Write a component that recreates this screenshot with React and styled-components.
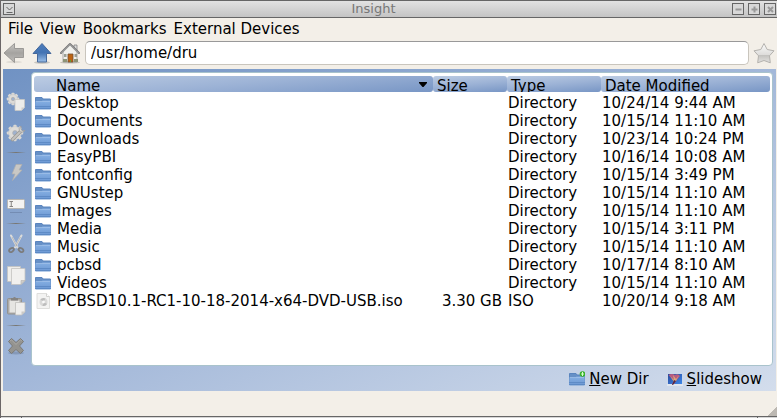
import React, { useState } from "react";
import styled, { createGlobalStyle } from "styled-components";

const GlobalStyle = createGlobalStyle`
  * { box-sizing: border-box; }
  body {
    margin: 0;
    background: #f3efe8;
    color: #000;
    font: 15px/18px "DejaVu Sans", sans-serif;
  }
  button, input { font: inherit; color: inherit; }
`;

const Window = styled.div`
  display: flex;
  flex-direction: column;
  min-height: 100vh;
  border-left: 1px solid #6b6667;
  background: #f3efe8;
`;

const TitleBar = styled.header`
  display: flex;
  align-items: center;
  height: 18px;
  padding: 0 1px 0 2px;
  border-top: 1px solid #666;
  border-bottom: 1px solid #666;
  background: linear-gradient(#e2e2e2, #c4c4c4);
`;

const Title = styled.h1`
  flex: 1;
  margin: 0;
  text-align: center;
  font-size: 13px;
  font-weight: 400;
  line-height: 18px;
  color: #777;
`;

const WindowControls = styled.div`
  display: flex;
  gap: 4px;
`;

const PlainButton = styled.button`
  display: flex;
  align-items: center;
  justify-content: center;
  padding: 0;
  border: 0;
  background: none;
`;

const WindowButton = styled(PlainButton)`
  width: 12px;
  height: 12px;
  border: 1px solid #666;
  background: #d8d8d8;
`;

const MenuBar = styled.nav`
  display: flex;
  gap: 7px;
  height: 22px;
  padding: 1px 7px;
`;

const MenuItem = styled(PlainButton)`
  height: 20px;
  line-height: 20px;
`;

const ToolBar = styled.div`
  display: flex;
  align-items: center;
  gap: 4px;
  height: 29px;
  padding: 0 2px 3px;
`;

const NavTools = styled.div`
  display: flex;
  gap: 6px;
`;

const ToolButton = styled(PlainButton)`
  flex: none;
  width: 22px;
  height: 26px;
`;

const PathInput = styled.input`
  flex: 1;
  min-width: 0;
  height: 24px;
  padding: 0 5px;
  border: 1px solid #c9c5bd;
  border-top-color: #999;
  border-radius: 5px;
  background: #fff;
  outline: none;
`;

const Body = styled.main`
  flex: 1;
  display: grid;
  grid-template-columns: 28px 1fr;
  grid-template-rows: 1fr 25px;
  margin: 0 1px 0 2px;
  padding-top: 3px;
  background: linear-gradient(to bottom right, #7092c3, #a3b8d9 50%, #d3ddec);
`;

const SideBar = styled.div`
  display: flex;
  flex-direction: column;
  padding-top: 14px;
  padding-right: 2px;
`;

const SideButton = styled(PlainButton)`
  height: 31px;
`;

const Separator = styled.hr`
  width: 20px;
  height: 1px;
  margin: 4px auto;
  border: 0;
  background: linear-gradient(90deg, transparent, #77756f 50%, transparent);
`;

const FilePane = styled.section`
  margin-right: 3px;
  padding: 3px 2px;
  border: 1px solid #a9c3cc;
  border-radius: 4px;
  background: #fff;
`;

const FileTable = styled.table`
  width: 100%;
  table-layout: fixed;
  border-collapse: collapse;
`;

const Col = styled.col`
  width: ${(p) => p.$width};
`;

const HeadCell = styled.th`
  padding: 0 0 2px;
  font-weight: 400;
  text-align: left;
`;

const HeadLabel = styled.div`
  display: flex;
  align-items: flex-start;
  justify-content: space-between;
  height: 16px;
  padding: 1px 6px 0 ${(p) => (p.$first ? "22px" : "4px")};
  border-radius: 3px;
  background: linear-gradient(175deg, #bccce3, #9db3d6 50%, #7896c5);
  overflow: hidden;
`;

const SortArrow = styled.svg`
  flex: none;
  margin-top: 5px;
`;

const Cell = styled.td`
  height: 18px;
  padding: 0 ${(p) => (p.$right ? "5px" : "0")} 0 1px;
  text-align: ${(p) => (p.$right ? "right" : "left")};
  white-space: nowrap;
`;

const FileName = styled.div`
  display: flex;
  align-items: center;
  gap: 6px;
  height: 18px;
`;

const ActionBar = styled.footer`
  grid-column: 2;
  display: flex;
  align-items: center;
  justify-content: flex-end;
  gap: 18px;
  padding: 1px 14px 0 0;
`;

const ActionButton = styled(PlainButton)`
  gap: 4px;
  height: 20px;
`;

const StatusBar = styled.div`
  display: flex;
  align-items: flex-end;
  justify-content: flex-end;
  height: 25px;
`;

const ResizeCorner = styled.div`
  width: 10px;
  height: 10px;
  background: linear-gradient(135deg, transparent 50%, #bcb8b2 50%);
`;

const BottomFrame = styled.div`
  height: 2px;
  padding: 0 19px 0 20px;
  border-top: 1px solid #666;
  background: #d6d6d6;
`;

const FrameHandle = styled.div`
  height: 1px;
  border: solid #666;
  border-width: 0 1px;
`;

const svg = (size, children) => (
  <svg width={size} height={size} viewBox={`0 0 ${size} ${size}`} aria-hidden="true">
    {children}
  </svg>
);

const BackIcon = () =>
  svg(22, <>
    <defs>
      <linearGradient id="back" x2="0" y2="1">
        <stop stopColor="#c9c7c4" /><stop offset=".5" stopColor="#a5a3a0" /><stop offset="1" stopColor="#bfbdba" />
      </linearGradient>
    </defs>
    <ellipse cx="11" cy="20" rx="8" ry="1.200" fill="#dedad3" />
    <path d="M1 11 11.500 1.500v5H20.500v9h-9v5z" fill="url(#back)" stroke="#9b9996" strokeLinejoin="round" />
  </>);

const UpIcon = () =>
  svg(22, <>
    <defs>
      <linearGradient id="up" x2="0" y2="1">
        <stop stopColor="#4d7cba" /><stop offset=".5" stopColor="#4373b3" /><stop offset="1" stopColor="#9bbfe8" />
      </linearGradient>
    </defs>
    <ellipse cx="11" cy="20.500" rx="8" ry="1.500" fill="#c9c6c0" />
    <path d="M11 1.500 20 11.500H15.500v8.500h-9v-8.500H2z" fill="url(#up)" stroke="#45689b" strokeLinejoin="round" />
  </>);

const HomeIcon = () =>
  svg(22, <>
    <ellipse cx="11" cy="20.500" rx="10" ry="1" fill="#c8c4bc" />
    <path d="M15 3h3v6h-3z" fill="#ddd" stroke="#777" strokeWidth=".7" />
    <path d="M4 10 11 3l7 7v10H4z" fill="#f1f1ed" stroke="#999" strokeWidth=".8" />
    <path d="m2 11 9-9 9 9" fill="none" stroke="#777" strokeWidth="2" strokeLinecap="round" strokeLinejoin="round" />
    <path d="m2.500 11 8.500-8.500 8.500 8.500" fill="none" stroke="#c4c4c4" strokeWidth=".8" />
    <path d="M9 12h5v8H9z" fill="#bd6413" stroke="#735033" strokeWidth=".8" />
    <path d="M5 12h2.500v3H5zM15.500 12H18v3h-2.500z" fill="#9b9f95" />
    <path d="M4 17h4v3H4zM15 17h4v3h-4z" fill="#8d9477" />
    <path d="M11 18h1v2h-1z" fill="#5f9c3f" />
  </>);

const StarIcon = () =>
  svg(22, <>
    <defs>
      <linearGradient id="star" x2="0" y2="1">
        <stop stopColor="#fbfbfa" /><stop offset=".6" stopColor="#dddcda" /><stop offset=".62" stopColor="#c4c3c0" /><stop offset="1" stopColor="#e4e3e1" />
      </linearGradient>
    </defs>
    <path d="m11 1.500 3.200 6 6.800 1.300-4.500 5 .8 7L11 18.500l-6.300 2.300.8-7L1 8.800l6.800-1.300z" fill="url(#star)" stroke="#b4b2ae" strokeLinejoin="round" />
  </>);

const FolderIcon = ({ isNew }) =>
  svg(16, <>
    <defs>
      <linearGradient id="folder" x2="0" y2="1">
        <stop stopColor="#86b0e3" /><stop offset="1" stopColor="#6c98d3" />
      </linearGradient>
    </defs>
    <path d="M.5 3V2.500h6.500l1 1.500h7.500V7H.5z" fill="#6690c6" stroke="#5a85be" />
    <path d="M.5 6.500h6L8 5.500h7.500v8.500H.5z" fill="url(#folder)" stroke="#739dd3" />
    <path d="M1 6.500h14" stroke="#9fc0e9" strokeWidth=".8" />
    <path d="M0 11.500h16M0 13.500h16" stroke="#5582be" strokeWidth=".7" />
    {isNew && <>
      <circle cx="13.500" cy="3" r="2.800" fill="#39b32b" />
      <path d="M13.500 1v4M12 3h3" stroke="#d9ffd0" strokeWidth="1" />
    </>}
  </>);

const DiscImageIcon = () =>
  svg(16, <>
    <path d="M2 .5h9.500l3 3v12H2z" fill="#f3f3f2" stroke="#dededc" />
    <path d="M11.500.5v3h3" fill="#fff" stroke="#d2d2d0" />
    <circle cx="8.500" cy="9" r="4" fill="#dadad9" />
    <path d="M8.500 9 5.500 6.500a4 4 0 0 1 5-1zM8.500 9l3.500 2a4 4 0 0 1-4.500 1.900z" fill="#bdbdbd" />
    <circle cx="8.500" cy="9" r="1.400" fill="#fafafa" />
  </>);

const SlideshowIcon = () =>
  svg(16, <>
    <defs>
      <linearGradient id="slide" x2="1" y2="1">
        <stop stopColor="#2b4a9c" /><stop offset="1" stopColor="#3d87e8" />
      </linearGradient>
    </defs>
    <path d="M0 13.500h16v1H0z" fill="#f2f2f2" />
    <path d="M1 3h14v10H1z" fill="url(#slide)" />
    <path d="M1.500 4q3.500-2 6.500 0 3-2 5 1l-4 5-2 3H5l2-3z" fill="#b85a80" />
    <path d="m3 5 4 4-1-5 3 4 3-4-3 6-2 1z" fill="#d9a87a" />
    <path d="m7 9 2 1-3 4H5z" fill="#512746" />
  </>);

const Gear = ({ cx, cy, r }) => (
  <>
    {[0, 45, 90, 135].map((a) => (
      <rect key={a} x={cx - 1.6} y={cy - r - 1.2} width="3.200" height={2 * r + 2.4} rx=".8" transform={`rotate(${a} ${cx} ${cy})`} fill="#d9d8d5" />
    ))}
    <circle cx={cx} cy={cy} r={r - 0.6} fill="#dddcd9" stroke="#cbcac7" strokeWidth=".6" />
    <circle cx={cx} cy={cy} r={r * 0.34} fill="#9fb2cf" stroke="#b0afac" strokeWidth=".7" />
  </>
);

const RunIcon = () =>
  svg(20, <>
    <Gear cx={7} cy={7} r={5} />
    <path d="M9 7.500h9.500v8l-3 3H9z" fill="#ededea" stroke="#c8c7c4" strokeWidth=".8" />
    <path d="M18.500 15.500h-3v3z" fill="#cfcecb" />
  </>);

const RunWithIcon = () =>
  svg(20, <>
    <Gear cx={9} cy={10} r={7} />
    <path d="m6.500 16.500 8-8" stroke="#9a9996" strokeWidth="3.600" strokeLinecap="round" />
    <path d="m6.500 16.500 8-8" stroke="#c3c2bf" strokeWidth="2" strokeLinecap="round" />
    <path d="M15 3q-3 2.500-1.500 5.500 3 2 5.500-1l-2.500.5-1.500-2z" fill="#d4d3d0" stroke="#9d9c99" strokeWidth=".7" />
  </>);

const BoltIcon = () =>
  svg(20, <path d="M10 1.500h6L13 7h3L6.500 17.500 9 11H6z" fill="#c9c8c5" stroke="#b0afac" strokeWidth=".7" />);

const RenameIcon = () =>
  svg(20, <>
    <path d="M4 18.500h12" stroke="#6e86ac" strokeWidth=".8" />
    <rect x="1.500" y="5.500" width="17" height="9" rx="1" fill="#f4f3f1" stroke="#b7b6b3" />
    <path d="M3.500 7.500H7M3.500 12.500H7M5.250 7.500v5" stroke="#888683" />
  </>);

const CutIcon = () =>
  svg(20, <>
    <path d="m5 1.500 6.500 12M15.500 1.500 9 13.500" stroke="#dddddb" strokeWidth="2" strokeLinecap="round" />
    <path d="m6 3 5 9.500M14.500 3 9.500 12.500" stroke="#a0a09f" strokeWidth=".6" />
    <ellipse cx="5.500" cy="16" rx="2.600" ry="1.700" transform="rotate(-35 5.500 16)" fill="none" stroke="#7c7c7c" strokeWidth="1.800" />
    <ellipse cx="15" cy="16" rx="2.600" ry="1.700" transform="rotate(35 15 16)" fill="none" stroke="#7c7c7c" strokeWidth="1.800" />
  </>);

const CopyIcon = () =>
  svg(20, <>
    <path d="M1.500 1.500h13v15h-13z" fill="#eeedea" stroke="#c4c3c0" strokeWidth=".8" />
    <path d="M5.500 3.500h13.500v12L15 19.500H5.500z" fill="#f1f0ee" stroke="#c4c3c0" strokeWidth=".8" />
    <path d="M19 15.500h-4v4z" fill="#cfcecb" stroke="#b3b2af" strokeWidth=".6" />
  </>);

const PasteIcon = () =>
  svg(20, <>
    <rect x="1.500" y="2.500" width="14" height="15.500" rx="1" fill="#adaca9" stroke="#93928f" />
    <path d="M3.500 4.500h10v12h-10z" fill="#e6e5e2" />
    <path d="M5 4V2h2q1.500-2 3 0h2v2.500H5z" fill="#858482" />
    <path d="M9.500 6.500H19V16l-3.500 3h-6z" fill="#efeeec" stroke="#c0bfbc" strokeWidth=".8" />
    <path d="M19 15.500h-3.500V19z" fill="#c9c8c5" />
  </>);

const DeleteIcon = () =>
  svg(20, <>
    <ellipse cx="10" cy="17" rx="8" ry="1.500" fill="#8599b9" />
    <path d="m2.500 5.500 3-3L10 6.500l4.500-4 3 3L13.500 10l4 4.500-3 3-4.500-4-4.500 4-3-3 4-4.500z" fill="#94938f" stroke="#7b7a77" strokeLinejoin="round" />
    <path d="m4 5 1.500-1.200L10 8.500l4.500-4.700L16 5" fill="none" stroke="#b0afac" strokeWidth=".7" />
  </>);

const glyphs = {
  Menu: "M1.500 2l3 3 3-3M1.500 7.500h6",
  Minimize: "M1.500 4.500h6",
  Maximize: "M1.500 4.500h6M4.500 1.500v6",
  Close: "M2 2l5 5M7 2l-5 5",
};

const FrameButton = ({ kind }) => (
  <WindowButton type="button" aria-label={kind}>
    {svg(9, <path d={glyphs[kind]} fill="none" stroke={kind === "Menu" ? "#666" : "#999"} strokeWidth={kind === "Menu" ? 1 : 2} />)}
  </WindowButton>
);

const files = [
  ["Desktop", "", "Directory", "10/24/14 9:44 AM"],
  ["Documents", "", "Directory", "10/15/14 11:10 AM"],
  ["Downloads", "", "Directory", "10/23/14 10:24 PM"],
  ["EasyPBI", "", "Directory", "10/16/14 10:08 AM"],
  ["fontconfig", "", "Directory", "10/15/14 3:49 PM"],
  ["GNUstep", "", "Directory", "10/15/14 11:10 AM"],
  ["Images", "", "Directory", "10/15/14 11:10 AM"],
  ["Media", "", "Directory", "10/15/14 3:11 PM"],
  ["Music", "", "Directory", "10/15/14 11:10 AM"],
  ["pcbsd", "", "Directory", "10/17/14 8:10 AM"],
  ["Videos", "", "Directory", "10/15/14 11:10 AM"],
  ["PCBSD10.1-RC1-10-18-2014-x64-DVD-USB.iso", "3.30 GB", "ISO", "10/20/14 9:18 AM"],
];

const sideTools = [
  ["Run", RunIcon],
  ["Run with", RunWithIcon],
  null,
  ["Actions", BoltIcon],
  ["Rename", RenameIcon],
  null,
  ["Cut", CutIcon],
  ["Copy", CopyIcon],
  ["Paste", PasteIcon],
  null,
  ["Delete", DeleteIcon],
];

export default function App() {
  const [path, setPath] = useState("/usr/home/dru");
  return (
    <Window>
      <GlobalStyle />
      <TitleBar>
        <FrameButton kind="Menu" />
        <Title>Insight</Title>
        <WindowControls>
          <FrameButton kind="Minimize" />
          <FrameButton kind="Maximize" />
          <FrameButton kind="Close" />
        </WindowControls>
      </TitleBar>
      <MenuBar>
        {["File", "View", "Bookmarks", "External Devices"].map((label) => (
          <MenuItem key={label} type="button">{label}</MenuItem>
        ))}
      </MenuBar>
      <ToolBar>
        <NavTools>
          <ToolButton type="button" aria-label="Back"><BackIcon /></ToolButton>
          <ToolButton type="button" aria-label="Up"><UpIcon /></ToolButton>
          <ToolButton type="button" aria-label="Home"><HomeIcon /></ToolButton>
        </NavTools>
        <PathInput aria-label="Location" value={path} onChange={(e) => setPath(e.target.value)} />
        <ToolButton type="button" aria-label="Bookmark"><StarIcon /></ToolButton>
      </ToolBar>
      <Body>
        <SideBar>
          {sideTools.map((tool, i) => {
            if (!tool) return <Separator key={i} />;
            const [label, Icon] = tool;
            return <SideButton key={label} type="button" aria-label={label}><Icon /></SideButton>;
          })}
        </SideBar>
        <FilePane>
          <FileTable>
            <colgroup>
              <Col $width="auto" />
              <Col $width="74px" />
              <Col $width="94px" />
              <Col $width="169px" />
            </colgroup>
            <thead>
              <tr>
                <HeadCell scope="col" aria-sort="ascending">
                  <HeadLabel $first>
                    Name
                    <SortArrow width="8" height="5" viewBox="0 0 8 5" aria-hidden="true">
                      <path d="M0 0h8v1L4.500 5h-1L0 1z" />
                    </SortArrow>
                  </HeadLabel>
                </HeadCell>
                <HeadCell scope="col"><HeadLabel>Size</HeadLabel></HeadCell>
                <HeadCell scope="col"><HeadLabel>Type</HeadLabel></HeadCell>
                <HeadCell scope="col"><HeadLabel>Date Modified</HeadLabel></HeadCell>
              </tr>
            </thead>
            <tbody>
              {files.map(([name, size, type, date]) => (
                <tr key={name}>
                  <Cell>
                    <FileName>
                      {type === "Directory" ? <FolderIcon /> : <DiscImageIcon />}
                      {name}
                    </FileName>
                  </Cell>
                  <Cell $right>{size}</Cell>
                  <Cell>{type}</Cell>
                  <Cell>{date}</Cell>
                </tr>
              ))}
            </tbody>
          </FileTable>
        </FilePane>
        <ActionBar>
          <ActionButton type="button"><FolderIcon isNew /><span><u>N</u>ew Dir</span></ActionButton>
          <ActionButton type="button"><SlideshowIcon /><span><u>S</u>lideshow</span></ActionButton>
        </ActionBar>
      </Body>
      <StatusBar><ResizeCorner /></StatusBar>
      <BottomFrame><FrameHandle /></BottomFrame>
    </Window>
  );
}
